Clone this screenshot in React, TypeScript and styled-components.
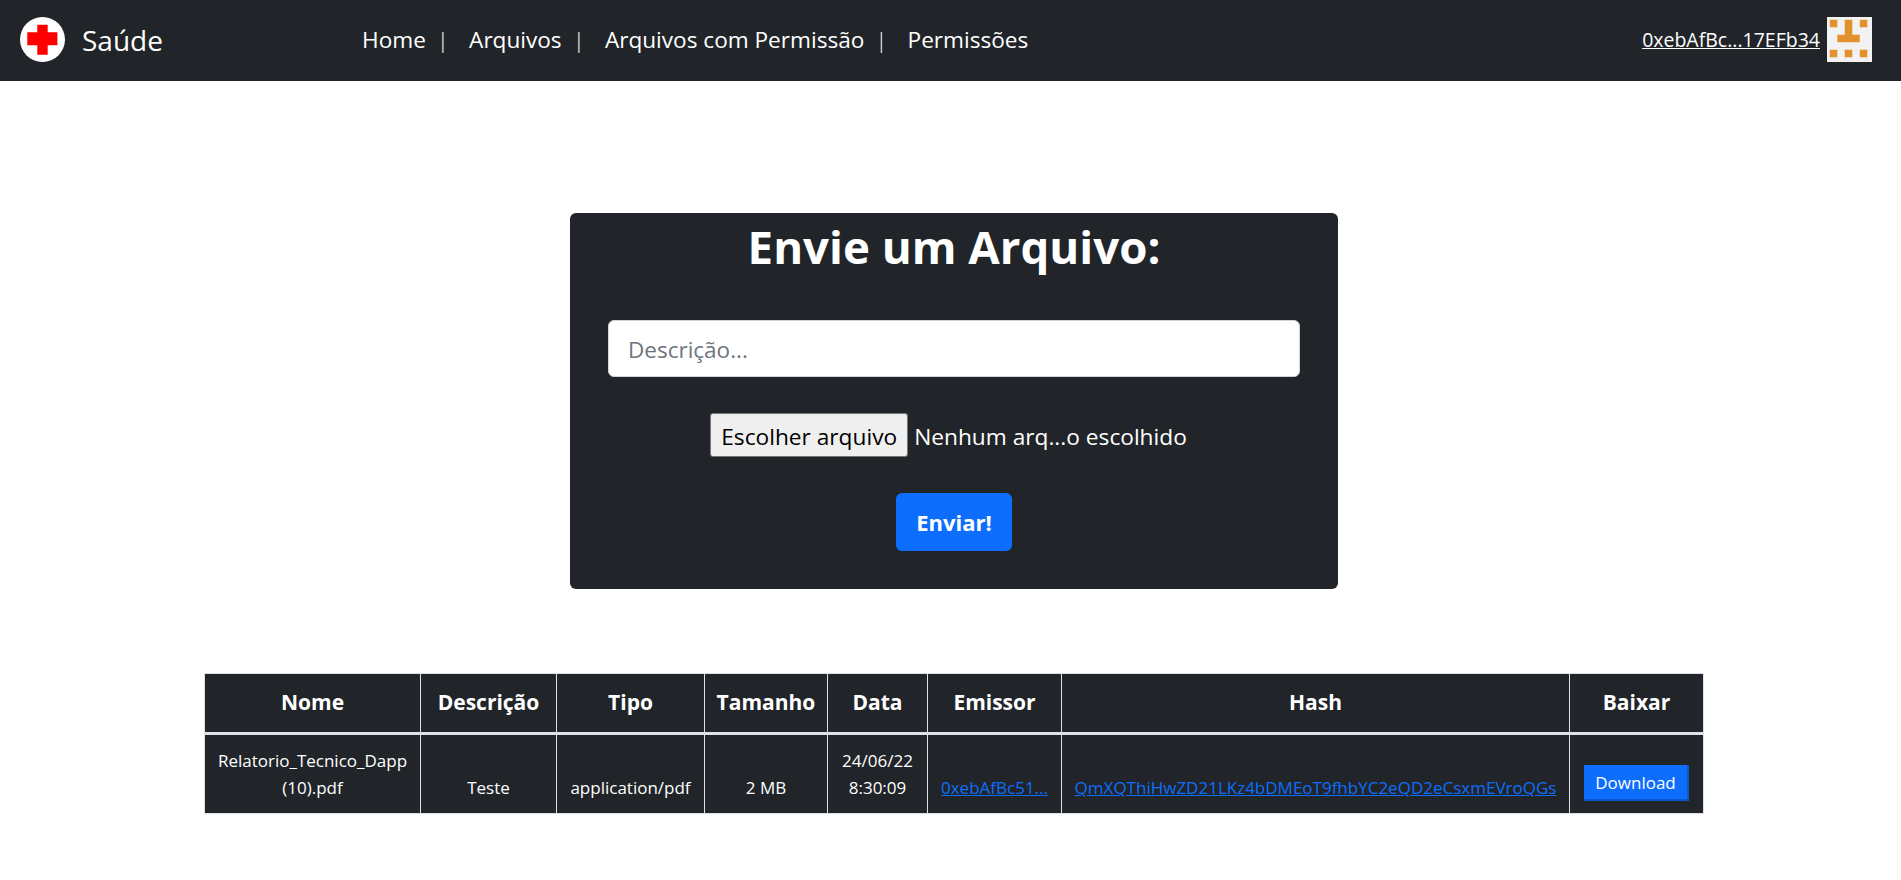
import React from 'react';
import styled, {createGlobalStyle} from 'styled-components';

const GlobalStyle = createGlobalStyle`
  body {
    margin: 0;
    background: #fff;
    font-family: "Open Sans", "Noto Sans", "Liberation Sans", sans-serif;
    color: #212529;
  }
`;

const Nav = styled.nav`
  height: 81px;
  box-sizing: border-box;
  background: #212529;
  display: flex;
  align-items: center;
  padding: 0 29px 2px 20px;
  color: #fff;
`;
const Brand = styled.div`
  width: 342px;
  display: flex;
  align-items: center;
  gap: 17px;
  font-size: 28px;
  flex-shrink: 0;
`;
const NavLinks = styled.div`
  flex: 1;
  display: flex;
  align-items: center;
  font-size: 22.6px;
`;
const NavLink = styled.a`
  white-space: nowrap;
`;
const Pipe = styled.span`
  margin: 0 20px 0 11px;
  font-weight: 300;
`;
const Account = styled.div`
  display: flex;
  align-items: center;
  gap: 7px;
  font-size: 19.5px;

  > a {
    color: #fff;
    text-decoration: underline;
  }
`;
const Main = styled.main`
  display: flex;
  flex-direction: column;
  align-items: center;
  padding: 132px 0 0 7px;
`;
const Card = styled.form`
  width: 768px;
  height: 376px;
  box-sizing: border-box;
  background: #212529;
  border-radius: 6px;
  padding: 0 38px;
  display: flex;
  flex-direction: column;
  align-items: center;
  color: #fff;
`;
const Title = styled.h1`
  margin: 0 0 41px;
  font-size: 45.6px;
  line-height: 66px;
  font-weight: 700;
`;
const Field = styled.input`
  width: 100%;
  height: 57px;
  box-sizing: border-box;
  padding: 2px 19px 0;
  border: 1px solid #ced4da;
  border-radius: 6px;
  font: inherit;
  font-size: 22.5px;

  &::placeholder {
    color: #6c757d;
  }
`;
const FileRow = styled.div`
  margin: 36px 0;
  padding-right: 11px;
  display: flex;
  align-items: center;
  gap: 6px;
  font-size: 22.7px;
  white-space: nowrap;

  > span {
    padding-top: 2px;
  }
`;
const FileButton = styled.button`
  height: 44px;
  width: 198px;
  padding: 2px 0 0;
  background: #efefef;
  border: 1px solid #767676;
  border-radius: 3px;
  color: #000;
  font: inherit;
`;
const Send = styled.button`
  width: 116px;
  height: 58px;
  background: #0d6efd;
  border: none;
  border-radius: 6px;
  color: #fff;
  font: inherit;
  font-size: 22px;
  font-weight: 700;
`;
const Table = styled.table`
  margin-top: 84px;
  width: 1499px;
  table-layout: fixed;
  border-collapse: collapse;
  background: #212529;
  color: #fff;
  text-align: center;

  th, td {
    border: 1px solid #dee2e6;
    padding: 0 8px;
  }
  th {
    height: 60px;
    box-sizing: border-box;
    font-size: 21px;
    font-weight: 700;
    border-bottom-width: 3px;
    padding-bottom: 2px;
  }
  td {
    height: 80px;
    box-sizing: border-box;
    font-size: 17px;
    line-height: 27px;
    vertical-align: bottom;
    padding-bottom: 12px;
  }
  a {
    color: #0d6efd;
    text-decoration: underline;
    white-space: nowrap;
  }
`;
const Download = styled.button`
  display: block;
  margin: 0 auto;
  width: 105px;
  height: 36px;
  padding: 0;
  background: #0d6efd;
  border: none;
  border-bottom: 2px solid #0a58ca;
  border-right: 2px solid #0a58ca;
  color: #fff;
  font: inherit;
  font-size: 17px;
`;

const columns = [216, 136, 148, 123, 100, 134, 508, 134];
const links = ['Home', 'Arquivos', 'Arquivos com Permissão', 'Permissões'];

const Logo = () => (
  <svg width="45" height="45" viewBox="0 0 45 45">
    <circle cx="22.5" cy="22.5" r="22.5" fill="#fff"/>
    <path d="M17.3 7.7h10.4v7.6h9.7v13h-9.7v9.4H17.3v-9.4H7.3v-13h10z" fill="#f00"/>
  </svg>
);

const Avatar = () => (
  <svg width="45" height="45" viewBox="0 0 45 45">
    <rect width="45" height="45" fill="#f2f2f2"/>
    <path d="M2.8 2.8h7.5v7.5H2.8zM17.7 2.8h7.6v15h7.5v7.5H10.3v-7.5h7.4zM32.8 2.8h7.5v7.5h-7.5zM2.8 32.8h7.5v7.5H2.8zM17.7 32.8h7.6v7.5h-7.6zM32.8 32.8h7.5v7.5h-7.5z" fill="#e2922c"/>
  </svg>
);

const App: React.FC = () => (
  <>
    <GlobalStyle/>
    <Nav>
      <Brand><Logo/>Saúde</Brand>
      <NavLinks>
        {links.map((link, i) => (
          <NavLink key={link}>
            {link}{i < links.length - 1 && <Pipe>|</Pipe>}
          </NavLink>
        ))}
      </NavLinks>
      <Account>
        <a href="#">0xebAfBc...17EFb34</a>
        <Avatar/>
      </Account>
    </Nav>
    <Main>
      <Card>
        <Title>Envie um Arquivo:</Title>
        <Field placeholder="Descrição..."/>
        <FileRow>
          <FileButton type="button">Escolher arquivo</FileButton>
          <span>Nenhum arq...o escolhido</span>
        </FileRow>
        <Send type="button">Enviar!</Send>
      </Card>
      <Table>
        <colgroup>
          {columns.map((w, i) => <col key={i} width={w}/>)}
        </colgroup>
        <thead>
          <tr>
            <th>Nome</th>
            <th>Descrição</th>
            <th>Tipo</th>
            <th>Tamanho</th>
            <th>Data</th>
            <th>Emissor</th>
            <th>Hash</th>
            <th>Baixar</th>
          </tr>
        </thead>
        <tbody>
          <tr>
            <td>Relatorio_Tecnico_Dapp (10).pdf</td>
            <td>Teste</td>
            <td>application/pdf</td>
            <td>2 MB</td>
            <td>24/06/22 8:30:09</td>
            <td><a href="#">0xebAfBc51...</a></td>
            <td><a href="#">QmXQThiHwZD21LKz4bDMEoT9fhbYC2eQD2eCsxmEVroQGs</a></td>
            <td><Download type="button">Download</Download></td>
          </tr>
        </tbody>
      </Table>
    </Main>
  </>
);

export default App;
